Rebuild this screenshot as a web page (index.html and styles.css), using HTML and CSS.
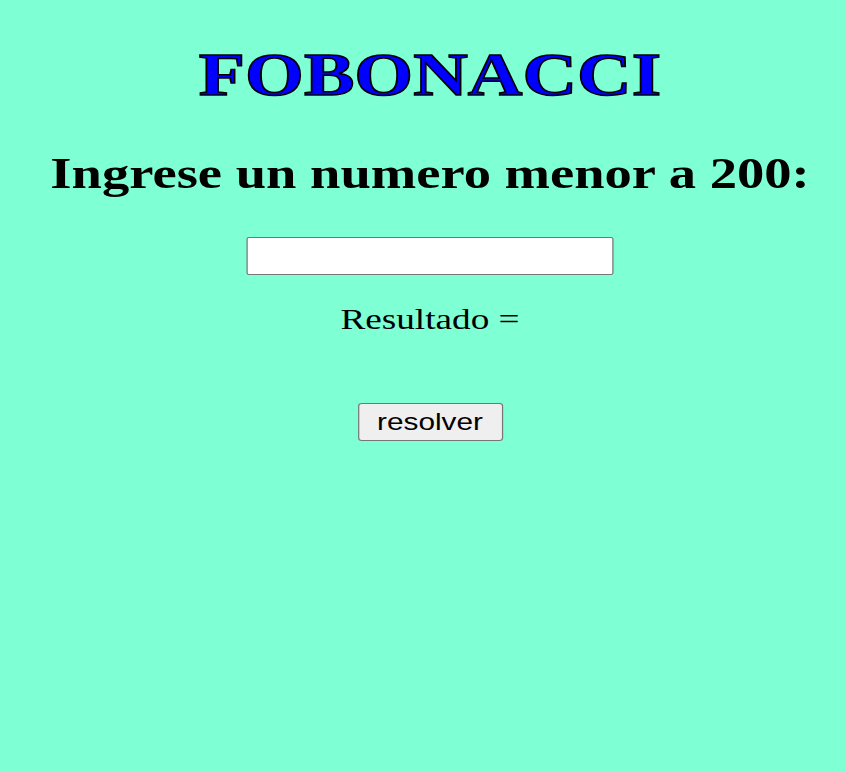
FILE: index.html
```html
<!DOCTYPE html>
<html lang="es">
<head>
<meta charset="utf-8">
<title>Fibonacci</title>
<link rel="stylesheet" href="styles.css">
</head>
<body>
<main class="page">
  <h1 class="title">FOBONACCI</h1>
  <h2 class="prompt">Ingrese un numero menor a 200:</h2>
  <input class="field" type="text">
  <p class="result">Resultado =</p>
  <button class="btn" type="button">resolver</button>
</main>
</body>
</html>
```

FILE: styles.css
```css
html, body {
  margin: 0;
  padding: 0;
  background: #7fffd4;
}
.page {
  width: 670px;
  margin-left: 95px;
  padding-top: 40px;
  display: flex;
  flex-direction: column;
  align-items: center;
  font-family: "Liberation Serif", "Times New Roman", serif;
  transform: scaleX(1.24);
  transform-origin: 50% 0;
}
.title {
  margin: 0;
  font-size: 61px;
  line-height: 70px;
  font-weight: bold;
  color: #0000ff;
  -webkit-text-stroke: 1.5px #000;
  white-space: nowrap;
}
.prompt {
  margin: 39px 0 0;
  font-size: 44px;
  line-height: 50px;
  font-weight: bold;
  color: #000;
  white-space: nowrap;
}
.field {
  margin: 38px 0 0;
  box-sizing: border-box;
  width: 296px;
  height: 38px;
  border: 1px solid #767676;
  border-radius: 2px;
  background: #fff;
}
.result {
  margin: 27px 0 0;
  font-size: 30px;
  line-height: 34px;
  color: #000;
}
.btn {
  margin: 67px 0 0;
  box-sizing: border-box;
  width: 117px;
  height: 38px;
  font-family: "Liberation Sans", Arial, sans-serif;
  font-size: 24px;
  color: #000;
  background: #efefef;
  border: 1px solid #767676;
  border-radius: 3px;
  padding: 0;
}
```
